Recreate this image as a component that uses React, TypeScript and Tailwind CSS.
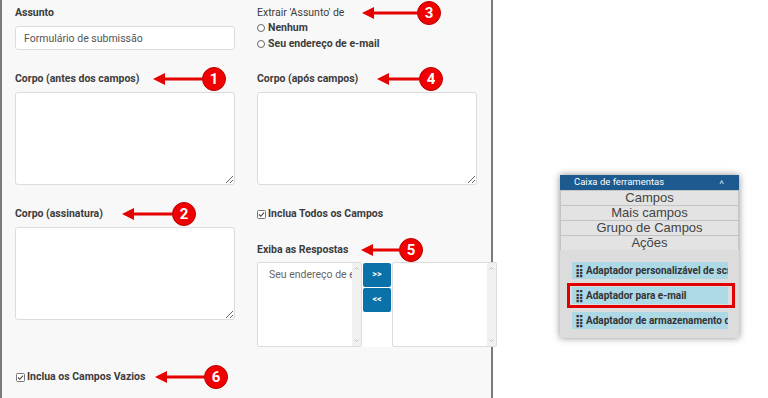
import React from 'react';

// annotation: red arrow pointing left + numbered circle
function Annot({ left, len, n }: { left: number; len: number; n: number }) {
  return (
    <div className="pointer-events-none absolute top-1/2 flex -translate-y-1/2 items-center" style={{ left }}>
      <svg width={len} height="14" viewBox={`0 0 ${len} 14`}>
        <path d="M0 7 L12 1 L12 13 Z" fill="#e60000" />
        <rect x="10" y="5.5" width={len - 10} height="3" fill="#e60000" />
      </svg>
      <div className="flex h-[24px] w-[24px] items-center justify-center rounded-full border border-[#b80000] bg-[#f00000] text-[15px] font-bold leading-none text-white">
        {n}
      </div>
    </div>
  );
}

function Label({ children, bold = true, annot }: { children: React.ReactNode; bold?: boolean; annot?: React.ReactNode }) {
  return (
    <div className={`relative h-[14px] text-[10.5px] leading-[14px] text-[#3c3c3c] ${bold ? 'font-bold' : ''}`}>
      {children}
      {annot}
    </div>
  );
}

function Area() {
  return (
    <textarea
      readOnly
      className="mt-[6px] block h-[93px] w-[220px] rounded-[3px] border border-[#dcdcdc] bg-white"
    />
  );
}

function Check({ label, annot }: { label: string; annot?: React.ReactNode }) {
  return (
    <div className="relative flex h-[14px] items-center gap-[2px] text-[10.5px] font-bold text-[#3c3c3c]">
      <svg width="9" height="9" viewBox="0 0 9 9">
        <rect x="0.5" y="0.5" width="8" height="8" rx="1" fill="#fff" stroke="#777" />
        <path d="M2 4.5 L3.8 6.3 L7 2.6" fill="none" stroke="#444" strokeWidth="1.1" />
      </svg>
      <span>{label}</span>
      {annot}
    </div>
  );
}

function Radio({ label }: { label: string }) {
  return (
    <div className="flex h-[16px] items-center gap-[3px] text-[10.5px] font-bold text-[#3c3c3c]">
      <span className="h-[8px] w-[8px] rounded-full border border-[#666] bg-white" />
      <span>{label}</span>
    </div>
  );
}

function Scroll() {
  return (
    <div className="flex w-[9px] shrink-0 flex-col items-center justify-between bg-[#f1f1f1] py-[4px]">
      <svg width="5" height="3" viewBox="0 0 5 3">
        <path d="M0.5 2.5 L2.5 0.5 L4.5 2.5" fill="none" stroke="#b0b0b0" strokeWidth="0.8" />
      </svg>
      <svg width="5" height="3" viewBox="0 0 5 3">
        <path d="M0.5 0.5 L2.5 2.5 L4.5 0.5" fill="none" stroke="#b0b0b0" strokeWidth="0.8" />
      </svg>
    </div>
  );
}

function ToolItem({ text }: { text: string }) {
  return (
    <div className="flex h-[17px] w-[156px] items-center overflow-hidden whitespace-nowrap bg-[#add8e6] pl-[3px] text-[10px] font-bold text-[#333]">
      <span className="mr-[2px] text-[12px] leading-none text-[#333]">⣿</span>
      {text}
    </div>
  );
}

export default function App() {
  return (
    <div className="flex h-[398px] w-[768px] overflow-hidden bg-white font-['Roboto',sans-serif]">
      {/* form panel */}
      <div className="h-full w-[493px] shrink-0 border-x-2 border-[#7a7a7a] bg-[#f8f8f8] pl-[13px] pt-[6px]">
        <div className="flex gap-[22px]">
          {/* left column */}
          <div className="w-[220px]">
            <Label>Assunto</Label>
            <input
              readOnly
              value="Formulário de submissão"
              className="mt-[6px] block h-[24px] w-[220px] rounded-[3px] border border-[#dcdcdc] bg-white pl-[8px] text-[10.5px] text-[#555]"
            />
            <div className="mt-[22px]">
              <Label annot={<Annot left={138} len={49} n={1} />}>Corpo (antes dos campos)</Label>
            </div>
            <Area />
            <div className="mt-[22px]">
              <Label annot={<Annot left={107} len={50} n={2} />}>Corpo (assinatura)</Label>
            </div>
            <Area />
          </div>

          {/* right column */}
          <div className="w-[220px]">
            <Label bold={false} annot={<Annot left={105} len={55} n={3} />}>Extrair 'Assunto' de</Label>
            <Radio label="Nenhum" />
            <Radio label="Seu endereço de e-mail" />
            <div className="mt-[20px]">
              <Label annot={<Annot left={120} len={42} n={4} />}>Corpo (após campos)</Label>
            </div>
            <Area />
            <div className="mt-[22px]">
              <Check label="Inclua Todos os Campos" />
            </div>
            <div className="mt-[22px]">
              <Label annot={<Annot left={104} len={38} n={5} />}>Exiba as Respostas</Label>
            </div>
            <div className="mt-[5px] flex h-[85px] w-[240px]">
              <div className="flex w-[105px] overflow-hidden rounded-[2px] border border-[#dcdcdc] bg-white">
                <div className="min-w-0 flex-1 overflow-hidden whitespace-nowrap pl-[11px] pt-[4px] text-[10.5px] text-[#666]">
                  Seu endereço de e-mail
                </div>
                <Scroll />
              </div>
              <div className="flex w-[30px] flex-col gap-px bg-white px-px pt-px">
                <button className="h-[24px] rounded-[2px] bg-[#0a72a9] text-[9px] font-bold text-white">&gt;&gt;</button>
                <button className="h-[24px] rounded-[2px] bg-[#0a72a9] text-[9px] font-bold text-white">&lt;&lt;</button>
              </div>
              <div className="flex w-[105px] rounded-[2px] border border-[#dcdcdc] bg-white">
                <div className="flex-1" />
                <Scroll />
              </div>
            </div>
          </div>
        </div>

        <div className="mt-[23px] pl-px">
          <Check label="Inclua os Campos Vazios" annot={<Annot left={139} len={49} n={6} />} />
        </div>
      </div>

      {/* toolbox */}
      <div className="flex-1 pl-[67px] pt-[175px]">
        <div className="w-[179px] bg-[#dcdcdc] pb-[9px] shadow-[0_0_7px_rgba(0,0,0,0.45)]">
          <div className="flex h-[15px] items-center justify-between bg-[#1c5a8f] pl-[14px] pr-[15px] text-[9.5px] text-white">
            <span>Caixa de ferramentas</span>
            <span className="text-[8px]">˄</span>
          </div>
          {['Campos', 'Mais campos', 'Grupo de Campos', 'Ações'].map((t) => (
            <div
              key={t}
              className="h-[15px] border-x border-t border-[#c4c4c4] bg-[#e3e3e3] text-center font-['Liberation_Sans',sans-serif] text-[13px] leading-[14px] text-[#444]"
            >
              {t}
            </div>
          ))}
          <div className="flex flex-col gap-[4px] pl-[12px] pt-[12px]">
            <ToolItem text="Adaptador personalizável de script" />
            <div className="-ml-[5px] w-[168px] border-[3px] border-[#e10000] py-[1px] pl-[2px]">
              <ToolItem text="Adaptador para e-mail" />
            </div>
            <ToolItem text="Adaptador de armazenamento de dados" />
          </div>
        </div>
      </div>
    </div>
  );
}
